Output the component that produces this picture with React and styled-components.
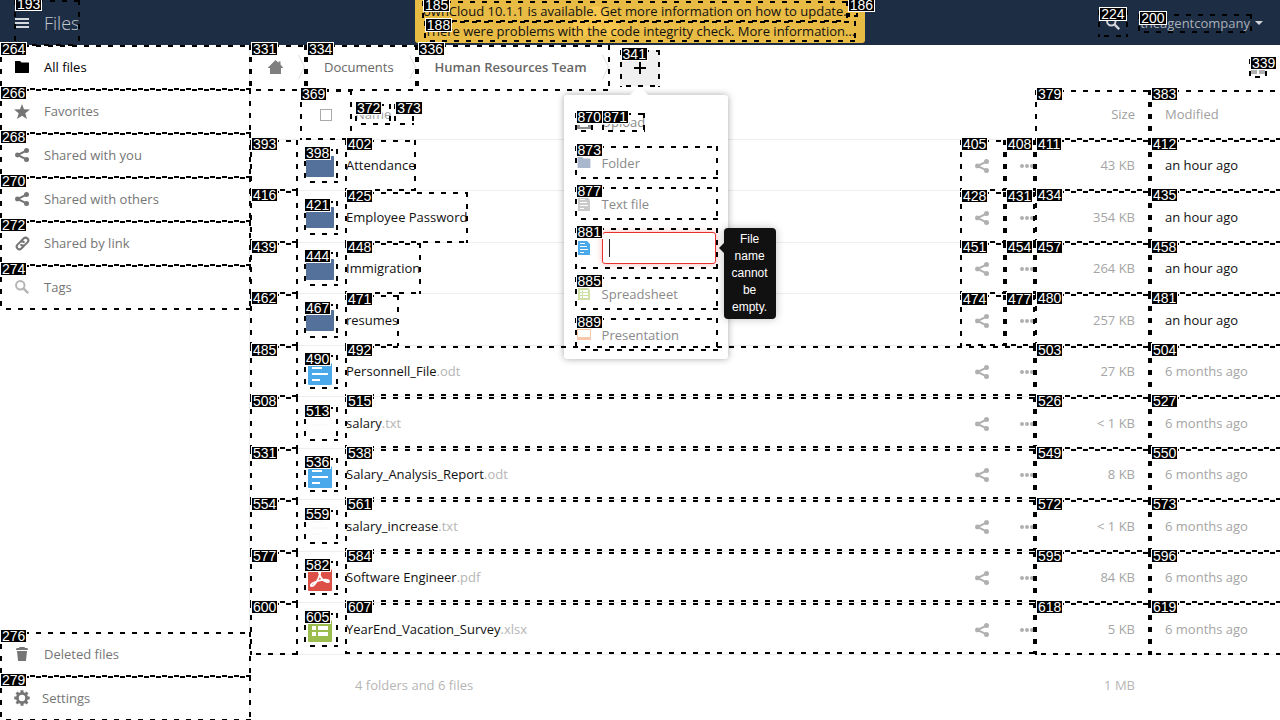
import React from "react";
import styled, { createGlobalStyle, css } from "styled-components";

const GlobalStyle = createGlobalStyle`
  *, *::before, *::after { box-sizing: border-box; }
  body {
    margin: 0;
    background: #fff;
    color: #000;
    font: 13px/20px "Open Sans", "Noto Sans", sans-serif;
    overflow-x: hidden;
  }
  a { color: inherit; text-decoration: none; }
  button { font: inherit; border: 0; padding: 0; margin: 0; background: none; color: inherit; }
  svg { display: block; flex: none; }
`;

/* ---------- element index marks ---------- */

const across = "repeating-linear-gradient(90deg, #000 0 5px, transparent 5px 12px)";
const acrossShifted =
  "repeating-linear-gradient(90deg, transparent 0 6px, #000 6px 11px, transparent 11px 12px)";
const down = "repeating-linear-gradient(180deg, #000 0 5px, transparent 5px 12px)";

const MarkFrame = styled.span`
  position: absolute;
  inset: ${(p) => (p.$wide ? "0" : p.$open ? "0 -4px -1px 0" : "0 0 -1px")};
  z-index: 20;
  pointer-events: none;
  background:
    ${across} 0 0 / 100% 2px no-repeat,
    ${(p) => (p.$wide ? across : acrossShifted)} 0 100% / 100% 2px no-repeat,
    ${down} 0 0 / 2px 100% no-repeat,
    ${down} 100% 0 / 2px 100% no-repeat;
`;

const MarkLabel = styled.span`
  position: absolute;
  top: -3px;
  left: ${(p) => (p.$flush ? "0" : "1px")};
  border: 1px solid #fff;
  padding: 0 1px;
  background: #000;
  color: #fff;
  font: 400 14px/12px "Liberation Sans", Arial, sans-serif;
`;

function Mark({ n, flush, wide, open }) {
  return (
    <MarkFrame $wide={wide} $open={open}>
      <MarkLabel $flush={flush}>{n}</MarkLabel>
    </MarkFrame>
  );
}

/* ---------- icons ---------- */

const ShareIcon = () => (
  <svg width="14" height="14" viewBox="0 0 14 14" fill="currentColor" stroke="currentColor">
    <path d="M11.5 2.7 2.5 7l9 4.3" fill="none" strokeWidth="2" />
    <g stroke="none">
      <circle cx="11.5" cy="2.5" r="2.5" />
      <circle cx="2.4" cy="7" r="2.4" />
      <circle cx="11.5" cy="11.5" r="2.5" />
    </g>
  </svg>
);
const DotsIcon = () => (
  <svg width="15" height="4" viewBox="0 0 15 4" fill="currentColor">
    <circle cx="2" cy="2" r="2" />
    <circle cx="7" cy="2" r="2" />
    <circle cx="12" cy="2" r="2" />
  </svg>
);
const FolderIcon = ({ w = 14, h = 12 }) => (
  <svg width={w} height={h} viewBox="0 0 14 12" fill="currentColor">
    <path d="M.5 0H5l1.5 1.5h7c.3 0 .5.2.5.5v9.5c0 .3-.2.5-.5.5H.5a.5.5 0 0 1-.5-.5V.5C0 .2.2 0 .5 0z" />
  </svg>
);
const StarIcon = () => (
  <svg width="16" height="15" viewBox="0 0 16 15" fill="currentColor">
    <path d="M8 0l2 5.3 6 .3-4.7 3.6L13 15l-5-3.3L3 15l1.7-5.8L0 5.6l6-.3z" />
  </svg>
);
const LinkIcon = () => (
  <svg width="15" height="15" viewBox="0 0 16 16" fill="none" stroke="currentColor" strokeWidth="2.2">
    <g transform="rotate(-45 8 8)">
      <path d="M7.5 10.9H3.4a2.9 2.9 0 0 1 0-5.8h3.8a2.9 2.9 0 0 1 2.7 3.8" />
      <path d="M8.5 5.1h4.1a2.9 2.9 0 0 1 0 5.8H8.8a2.9 2.9 0 0 1-2.7-3.8" />
    </g>
  </svg>
);
const SearchIcon = () => (
  <svg width="14" height="14" viewBox="0 0 14 14" fill="none" stroke="currentColor">
    <circle cx="5.3" cy="5.3" r="4.2" strokeWidth="2" />
    <path d="M8.2 8.2l5 5" strokeWidth="2.4" />
  </svg>
);
const TrashIcon = () => (
  <svg width="14" height="14" viewBox="0 0 14 14" fill="currentColor">
    <path d="M4.5 0h5l.5 1h2.5l.5 2H1l.5-2H4zM2 4h10l-1 9.4c0 .4-.3.6-.7.6H3.700c-.4 0-.7-.2-.7-.6z" />
  </svg>
);
const GearIcon = () => (
  <svg width="16" height="16" viewBox="0 0 16 16" fill="none" stroke="currentColor">
    <circle cx="8" cy="8" r="4.6" strokeWidth="2.8" />
    {[0, 45, 90, 135].map((a) => (
      <path key={a} d="M8 .3v2.700M8 13v2.700" strokeWidth="3" transform={`rotate(${a} 8 8)`} />
    ))}
  </svg>
);
const MenuIcon = () => (
  <svg width="14" height="10" viewBox="0 0 14 10" fill="#d5d8dc">
    <path d="M0 0h14v2H0zM0 4h14v2H0zM0 8h14v2H0z" />
  </svg>
);
const HomeIcon = () => (
  <svg width="15" height="14" viewBox="0 0 15 14" fill="#7f7f7f">
    <path d="M7.500 0l3 2.700V1.500h2v3L15 7.500V8h-2v6H2V8H0v-.5z" />
  </svg>
);
const ChevronIcon = () => (
  <svg width="7" height="24" viewBox="0 0 7 24" fill="none" stroke="#ddd">
    <path d="M.5 0l6 12-6 12" />
  </svg>
);
const GridIcon = () => (
  <svg width="14" height="14" viewBox="0 0 14 14" fill="#b0b0b0">
    <path d="M0 0h6v6H0zM8 0h6v6H8zM0 9h6v4H0zM8 9h6v4H8z" />
  </svg>
);
const PlusIcon = () => (
  <svg width="12" height="12" viewBox="0 0 12 12" fill="#000">
    <path d="M5 0h2v5h5v2H7v5H5V7H0V5h5z" />
  </svg>
);
const UploadIcon = () => (
  <svg width="14" height="14" viewBox="0 0 14 14" fill="#8c8c8c">
    <path d="M7 0l5 5H9v4H5V5H2zM0 10h3v2h8v-2h3v4H0z" />
  </svg>
);
const PageIcon = ({ color }) => (
  <svg width="12" height="14" viewBox="0 0 12 14">
    <path d="M.5 0H9l3 3v10.500c0 .3-.2.5-.5.5H.500a.5.5 0 0 1-.5-.5V.5C0 .2.2 0 .5 0z" fill={color} />
    <path d="M2 2.500h5M2 5.500h7M2 8.500h8M2 11.500h4" stroke="#fff" />
  </svg>
);
const SheetIcon = () => (
  <svg width="12" height="12" viewBox="0 0 12 12">
    <path d="M0 0h10l2 2v10H0z" fill="#cfe0a6" />
    <path d="M2 2h2v2H2zM5 2h5v2H5zM2 5h2v2H2zM5 5h5v2H5zM2 8h2v2H2zM5 8h5v2H5z" fill="#fff" />
  </svg>
);
const SlideIcon = () => (
  <svg width="14" height="11" viewBox="0 0 14 11">
    <path d="M0 0h14v11H0z" fill="#f8c8aa" />
    <path d="M1 1h12v7H1z" fill="#fff" />
  </svg>
);

const fileColors = { odt: "#49a9ea", txt: "#fefefe", pdf: "#dc5047", xlsx: "#9abd4e" };
const FileIcon = ({ kind }) => (
  <svg width="24" height="28" viewBox="0 0 24 28" fill="none" stroke="#fff">
    <path d="M1 0h16l7 7v20a1 1 0 0 1-1 1H1a1 1 0 0 1-1-1V1a1 1 0 0 1 1-1z" fill={fileColors[kind]} stroke="none" />
    {(kind === "odt" || kind === "txt") && (
      <path d="M4 5h8M4 11h10M4 17h16M4 23h8" strokeWidth="2" stroke={kind === "txt" ? "#fafafa" : "#fff"} />
    )}
    {kind === "pdf" && (
      <path
        d="M11.500 6c2 0 .8 5-1 9-2 4.500-5.500 9-7.300 8-1.500-1 2-3.800 6.500-5 5-1.400 11.300-2 11.300.2 0 2-4.500.7-7-2.200C11.500 13.200 9.700 6 11.500 6z"
        strokeWidth="1.800"
      />
    )}
    {kind === "xlsx" && (
      <path
        d="M4 6h4v4H4zM10 6h10v4H10zM4 12h4v4H4zM10 12h10v4H10zM4 18h4v4H4zM10 18h10v4H10z"
        fill="#fff"
        stroke="none"
      />
    )}
  </svg>
);
const CloudLogo = () => (
  <svg width="52" height="34" viewBox="0 0 52 34" fill="#f7c64c">
    <circle cx="26" cy="13" r="12" />
    <circle cx="11" cy="23" r="9" />
    <circle cx="41" cy="23" r="9" />
    <circle cx="26" cy="24" r="8" fill="none" stroke="#e8bb45" strokeWidth="1.500" />
  </svg>
);

/* ---------- header ---------- */

const Header = styled.header`
  position: relative;
  display: flex;
  align-items: center;
  justify-content: space-between;
  height: 45px;
  padding: 0 17px 0 14px;
  background: #1d2d44;
  color: #a9afb8;
`;
const AppSwitch = styled.button`
  position: relative;
  display: flex;
  align-items: center;
  gap: 15px;
  height: 45px;
  padding: 0 1px;
  font-size: 18px;
  font-weight: 300;
  color: #c3c8cf;
`;
const HeaderTools = styled.div`
  display: flex;
  align-items: center;
  gap: 10px;
`;
const SearchButton = styled.button`
  position: relative;
  display: grid;
  place-items: center;
  width: 30px;
  height: 26px;
  color: #d2d5da;
`;
const UserButton = styled.button`
  display: flex;
  align-items: center;
  gap: 3px;
  color: #a9afb8;
`;
const UserName = styled.span`
  position: relative;
  padding: 0 2px;
  line-height: 18px;
`;
const Caret = styled.span`
  border: 4px solid transparent;
  border-top-color: #d2d5da;
  border-bottom: 0;
`;

const Notice = styled.div`
  position: absolute;
  z-index: 5;
  top: 0;
  left: 50%;
  width: 450px;
  height: 43px;
  transform: translateX(-50%);
  padding: 1px 7px;
  border-radius: 0 0 3px 3px;
  background: #e8bb45;
  color: #111;
`;
const NoticeLogo = styled.div`
  position: absolute;
  top: 5px;
  left: 155px;
  display: flex;
  align-items: center;
  gap: 13px;
  font-size: 20px;
  color: #edc04b;
`;
const NoticeRow = styled.div`
  position: relative;
  display: flex;
  justify-content: ${(p) => (p.$center ? "center" : "space-between")};
`;
const NoticeLink = styled.a`
  position: relative;
  white-space: nowrap;
  padding: 0 1px;
`;
const NoticeClose = styled.a`
  position: relative;
  width: 17px;
  height: 15px;
`;

/* ---------- page frame and side bar ---------- */

const Body = styled.div`
  display: grid;
  grid-template-columns: 250px minmax(0, 1fr);
  min-height: calc(100vh - 45px);
`;
const Side = styled.nav`
  display: flex;
  flex-direction: column;
  justify-content: space-between;
  border-right: 1px solid #eee;
`;
const SideLink = styled.a`
  position: relative;
  display: grid;
  grid-template-columns: 16px 1fr;
  column-gap: ${(p) => (p.$tight ? "12px" : "14px")};
  align-items: center;
  justify-items: start;
  height: 44px;
  margin-right: -2px;
  padding-left: 14px;
  color: ${(p) => (p.$active ? "#000" : "#757575")};

  svg { justify-self: center; color: ${(p) => (p.$pale ? "#b5b5b5" : "inherit")}; }
`;

/* ---------- controls ---------- */

const Controls = styled.div`
  display: flex;
  align-items: center;
  height: 45px;
  padding-right: 13px;
`;
const Crumb = styled.a`
  position: relative;
  display: flex;
  align-items: center;
  gap: 15px;
  height: 45px;
  padding: 0 1px 2px 18px;
  color: #666;
  font-weight: ${(p) => (p.$current ? 600 : 400)};
  white-space: nowrap;
`;
const NewWrap = styled.div`
  position: relative;
  margin: 0 auto 0 10px;
`;
const NewButton = styled.button`
  position: relative;
  display: grid;
  place-items: center;
  width: 40px;
  height: 36px;
  background: #f0f0f0;
`;
const ViewButton = styled.button`
  position: relative;
  display: grid;
  place-items: center;
  width: 18px;
  height: 18px;
`;

/* ---------- new-file menu ---------- */

const Menu = styled.div`
  position: absolute;
  z-index: 10;
  top: 45px;
  left: -56px;
  width: 164px;
  display: flex;
  flex-direction: column;
  gap: 9px;
  padding: 10px 10px 9px 11px;
  border-radius: 3px;
  background: #fff;
  box-shadow: 0 0 7px rgba(0, 0, 0, 0.35);

  &::before {
    content: "";
    position: absolute;
    top: -9px;
    left: 65px;
    border: 10px solid transparent;
    border-top: 0;
    border-bottom-color: #fff;
  }
`;
const itemRow = css`
  position: relative;
  display: grid;
  grid-template-columns: 18px 1fr;
  column-gap: 9px;
  align-items: center;
  justify-items: start;
  color: #8a8a8a;
`;
const MenuItem = styled.button`
  ${itemRow}
  height: 32px;
  padding-top: 2px;
`;
const MenuForm = styled.form`
  ${itemRow}
  height: 40px;
  padding-right: 2px;
`;
const IconSlot = styled.span`
  position: relative;
  display: grid;
  place-items: center;
  width: 18px;
  height: 18px;
  color: #a9b8cd;
`;
const ItemText = styled.span`
  position: relative;
  line-height: 18px;
`;
const NameInput = styled.input`
  width: 100%;
  height: 32px;
  padding: 0 7px;
  border: 1px solid #e9322d;
  border-radius: 3px;
  outline: 0;
  box-shadow: 0 0 6px #f8b9b7;
  font: inherit;
`;
const TextCaret = styled.span`
  position: absolute;
  left: 34px;
  width: 1px;
  height: 18px;
  background: #222;
`;
const Tooltip = styled.div`
  position: absolute;
  z-index: 12;
  top: 0;
  left: 149px;
  width: 52px;
  padding: 3px 5px;
  border-radius: 4px;
  background: #111;
  box-shadow: 0 0 8px rgba(0, 0, 0, 0.25);
  color: #fff;
  font: 12px/17px "Liberation Sans", Arial, sans-serif;
  text-align: center;

  &::before {
    content: "";
    position: absolute;
    top: 15px;
    left: -5px;
    border: 5px solid transparent;
    border-left: 0;
    border-right-color: #111;
  }
`;

/* ---------- file table ---------- */

const Table = styled.table`
  width: 100%;
  table-layout: fixed;
  border-collapse: separate;
  border-spacing: 0;
`;
const Col = styled.col`
  width: ${(p) => p.$w};
`;
const Row = styled.tr`
  & > td { height: 51px; }
  &:nth-child(even) > td { height: 52px; }
`;
const Head = styled.th`
  position: relative;
  height: 50px;
  padding: ${(p) => p.$pad || "0"};
  border-bottom: 1px solid #eee;
  color: #a0a0a0;
  font-weight: 400;
  text-align: ${(p) => p.$align || "left"};
`;
const Cell = styled.td`
  position: relative;
  padding: ${(p) => p.$pad || "0"};
  border-bottom: 1px solid #eee;
  color: ${(p) => (p.$dark ? "#111" : "#a5a5a5")};
  text-align: ${(p) => p.$align || "left"};
  white-space: nowrap;
`;
const SelectAll = styled.label`
  position: relative;
  display: grid;
  place-items: center;
  width: 52px;
  height: 49px;
  margin: 0 -8px 0 50px;
`;
const Check = styled.input`
  appearance: none;
  width: 12px;
  height: 12px;
  margin: 0;
  border: 1px solid #aaa;
  background: #fff;
`;
const SortLinks = styled.div`
  display: flex;
  gap: 3px;
`;
const SortLink = styled.a`
  position: relative;
  min-width: 20px;
  height: 20px;
`;
const Thumb = styled.span`
  position: relative;
  display: grid;
  place-items: center;
  width: 34px;
  height: 33px;
  margin: 1px 0 0 6px;
  padding: 0 2px 2px 0;
  color: #54719b;
`;
const NameLine = styled.div`
  display: flex;
  align-items: stretch;
  height: 50px;
`;
const NameLink = styled.a`
  position: relative;
  display: flex;
  align-items: center;
  padding: 0 1px;
  color: #111;
`;
const Ext = styled.span`
  color: #b5b5b5;
`;
const Actions = styled.div`
  display: flex;
  margin-left: auto;
  padding-top: 2px;
  color: #b0b0b0;
`;
const Action = styled.button`
  display: grid;
  align-items: center;
  position: relative;
  width: ${(p) => p.$w};
  padding-left: 15px;
`;
const ActionBox = styled.span`
  position: absolute;
  inset: -2px 0 0;
`;
const Summary = styled.td`
  height: 60px;
  padding: ${(p) => p.$pad || "0"};
  color: #b5b5b5;
  text-align: ${(p) => p.$align || "left"};
`;

const files = [
  { name: "Attendance", size: "43 KB", date: "an hour ago", m: [393, 398, 402, 411, 412], a: [405, 408] },
  { name: "Employee Password", size: "354 KB", date: "an hour ago", m: [416, 421, 425, 434, 435], a: [428, 431] },
  { name: "Immigration", size: "264 KB", date: "an hour ago", m: [439, 444, 448, 457, 458], a: [451, 454] },
  { name: "resumes", size: "257 KB", date: "an hour ago", m: [462, 467, 471, 480, 481], a: [474, 477] },
  { name: "Personnell_File", ext: "odt", size: "27 KB", m: [485, 490, 492, 503, 504] },
  { name: "salary", ext: "txt", size: "< 1 KB", m: [508, 513, 515, 526, 527] },
  { name: "Salary_Analysis_Report", ext: "odt", size: "8 KB", m: [531, 536, 538, 549, 550] },
  { name: "salary_increase", ext: "txt", size: "< 1 KB", m: [554, 559, 561, 572, 573] },
  { name: "Software Engineer", ext: "pdf", size: "84 KB", m: [577, 582, 584, 595, 596] },
  { name: "YearEnd_Vacation_Survey", ext: "xlsx", size: "5 KB", m: [600, 605, 607, 618, 619] },
];

function FileRow({ file }) {
  const { name, ext, size, date = "6 months ago", m, a } = file;
  return (
    <Row>
      <Cell><Mark n={m[0]} /></Cell>
      <Cell>
        <Thumb>
          {ext ? <FileIcon kind={ext} /> : <FolderIcon w={28} h={24} />}
          <Mark n={m[1]} flush />
        </Thumb>
      </Cell>
      <Cell>
        {ext && <Mark n={m[2]} wide />}
        <NameLine>
          <NameLink href="#">
            {name}
            {ext && <Ext>.{ext}</Ext>}
            {!ext && <Mark n={m[2]} />}
          </NameLink>
          <Actions>
            <Action $w="45px" aria-label="Share">
              <ShareIcon />
              {a && <ActionBox><Mark n={a[0]} /></ActionBox>}
            </Action>
            <Action $w="30px" aria-label="More">
              <DotsIcon />
              {a && <ActionBox><Mark n={a[1]} /></ActionBox>}
            </Action>
          </Actions>
        </NameLine>
      </Cell>
      <Cell $align="right" $pad="0 15px 0 0">{size}<Mark n={m[3]} /></Cell>
      <Cell $pad="0 0 0 15px" $dark={!ext}>{date}<Mark n={m[4]} open /></Cell>
    </Row>
  );
}

function NewMenu() {
  return (
    <Menu>
      <MenuItem>
        <IconSlot><UploadIcon /><Mark n={870} /></IconSlot>
        <ItemText>Upload<Mark n={871} flush /></ItemText>
      </MenuItem>
      <MenuItem>
        <IconSlot><FolderIcon w={14} h={11} /></IconSlot>Folder<Mark n={873} />
      </MenuItem>
      <MenuItem>
        <IconSlot><PageIcon color="#c9c9c9" /></IconSlot>Text file<Mark n={877} />
      </MenuItem>
      <MenuForm>
        <IconSlot><PageIcon color="#49a9ea" /></IconSlot>
        <NameInput type="text" aria-label="Document name" />
        <TextCaret />
        <Mark n={881} />
        <Tooltip role="tooltip">File name cannot be empty.</Tooltip>
      </MenuForm>
      <MenuItem>
        <IconSlot><SheetIcon /></IconSlot>Spreadsheet<Mark n={885} />
      </MenuItem>
      <MenuItem>
        <IconSlot><SlideIcon /></IconSlot>Presentation<Mark n={889} />
      </MenuItem>
    </Menu>
  );
}

export default function App() {
  return (
    <>
      <GlobalStyle />
      <Header>
        <AppSwitch><MenuIcon />Files<Mark n={193} /></AppSwitch>
        <Notice>
          <NoticeLogo><CloudLogo />ownCloud</NoticeLogo>
          <NoticeRow>
            <NoticeLink href="#">
              ownCloud 10.1.1 is available. Get more information on how to update.
              <Mark n={185} />
            </NoticeLink>
            <NoticeClose href="#" aria-label="Dismiss"><Mark n={186} flush /></NoticeClose>
          </NoticeRow>
          <NoticeRow $center>
            <NoticeLink href="#">
              There were problems with the code integrity check. More information…
              <Mark n={188} />
            </NoticeLink>
          </NoticeRow>
        </Notice>
        <HeaderTools>
          <SearchButton aria-label="Search"><SearchIcon /><Mark n={224} /></SearchButton>
          <UserButton>
            <UserName>theagentcompany<Mark n={200} /></UserName>
            <Caret />
          </UserButton>
        </HeaderTools>
      </Header>
      <Body>
        <Side>
          <div>
            <SideLink href="#" $active><FolderIcon />All files<Mark n={264} flush /></SideLink>
            <SideLink href="#"><StarIcon />Favorites<Mark n={266} flush /></SideLink>
            <SideLink href="#"><ShareIcon />Shared with you<Mark n={268} flush /></SideLink>
            <SideLink href="#"><ShareIcon />Shared with others<Mark n={270} flush /></SideLink>
            <SideLink href="#"><LinkIcon />Shared by link<Mark n={272} flush /></SideLink>
            <SideLink href="#" $pale><SearchIcon />Tags<Mark n={274} flush /></SideLink>
          </div>
          <div>
            <SideLink href="#"><TrashIcon />Deleted files<Mark n={276} flush /></SideLink>
            <SideLink href="#" $tight><GearIcon />Settings<Mark n={279} flush /></SideLink>
          </div>
        </Side>
        <main>
          <Controls>
            <Crumb href="#" aria-label="Home"><HomeIcon /><ChevronIcon /><Mark n={331} /></Crumb>
            <Crumb href="#">Documents<ChevronIcon /><Mark n={334} /></Crumb>
            <Crumb href="#" $current>Human Resources Team<ChevronIcon /><Mark n={336} /></Crumb>
            <NewWrap>
              <NewButton aria-label="New"><PlusIcon /><Mark n={341} /></NewButton>
              <NewMenu />
            </NewWrap>
            <ViewButton aria-label="Grid view"><GridIcon /><Mark n={339} /></ViewButton>
          </Controls>
          <Table>
            <colgroup>
              <Col $w="48px" />
              <Col $w="47px" />
              <Col />
              <Col $w="115px" />
              <Col $w="130px" />
            </colgroup>
            <thead>
              <tr>
                <Head colSpan={2}>
                  <SelectAll>
                    <Check type="checkbox" aria-label="Select all" />
                    <Mark n={369} flush />
                  </SelectAll>
                </Head>
                <Head $pad="0 0 2px 10px">
                  <SortLinks>
                    <SortLink href="#">Name<Mark n={372} flush /></SortLink>
                    <SortLink href="#" aria-label="Sort direction"><Mark n={373} /></SortLink>
                  </SortLinks>
                </Head>
                <Head $align="right" $pad="0 15px 2px 0">Size<Mark n={379} /></Head>
                <Head $pad="0 0 2px 15px">Modified<Mark n={383} open /></Head>
              </tr>
            </thead>
            <tbody>
              {files.map((f) => <FileRow key={f.name} file={f} />)}
            </tbody>
            <tfoot>
              <tr>
                <Summary colSpan={3} $pad="0 0 0 105px">4 folders and 6 files</Summary>
                <Summary $align="right" $pad="0 15px 0 0">1 MB</Summary>
                <Summary />
              </tr>
            </tfoot>
          </Table>
        </main>
      </Body>
    </>
  );
}
